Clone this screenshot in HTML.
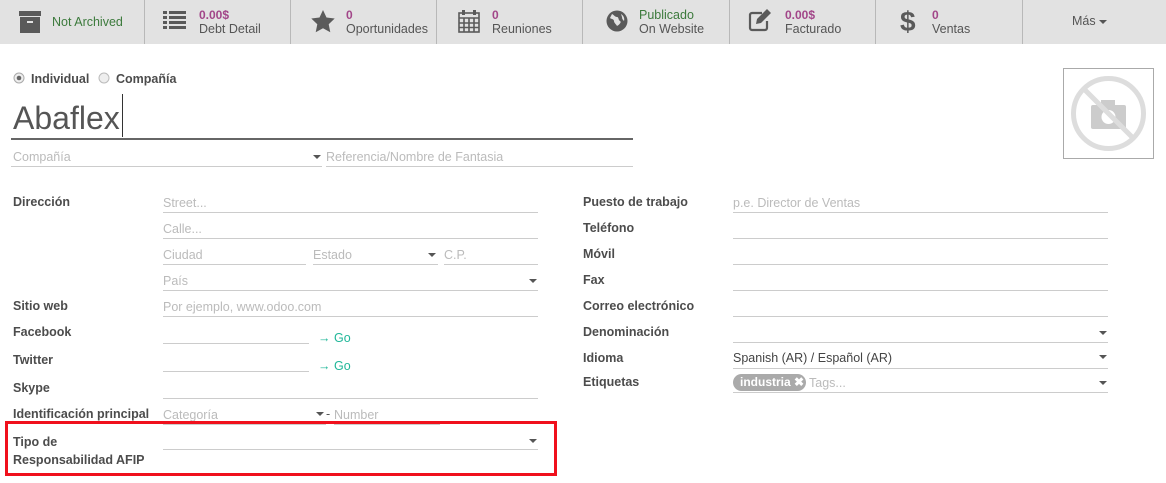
<!DOCTYPE html>
<html><head><meta charset="utf-8"><style>
*{box-sizing:border-box;margin:0;padding:0}
body{width:1166px;height:483px;background:#fff;font-family:"Liberation Sans",sans-serif;font-size:12.5px;color:#4c4c4c;position:relative;overflow:hidden}
.bar{position:absolute;left:0;top:0;width:1166px;height:44px;background:#e2e2e2}
.btn{position:absolute;top:0;height:44px;border-right:1px solid #b8b8b8}
.btn svg{position:absolute}
.btn .t{position:absolute;line-height:14px;font-size:12.5px;color:#555}
.v{color:#a24689;font-weight:bold;font-size:12px}
.btn .g,.g{color:#3c7a3c}
.a{position:absolute;white-space:nowrap}
.lb{font-weight:bold;color:#4c4c4c;font-size:12.5px}
.ph{color:#bbb;font-size:12.5px}
.ln{position:absolute;height:1px;background:#ccc}
.car{position:absolute;width:0;height:0;border-left:4px solid transparent;border-right:4px solid transparent;border-top:4px solid #555}
</style></head><body>
<div class="bar">
 <div class="btn" style="left:0;width:145px">
  <svg style="left:19px;top:11px" width="22" height="22" viewBox="0 0 22 22"><rect x="0" y="0" width="22" height="5" fill="#5a5a5a"/><rect x="1" y="6" width="20" height="16" fill="#5a5a5a"/><rect x="8" y="10" width="6" height="2" fill="#e2e2e2"/></svg>
  <div class="t g" style="left:52px;top:15px;color:#3c7a3c">Not Archived</div></div>
 <div class="btn" style="left:145px;width:146px">
  <svg style="left:18px;top:11px" width="23" height="19" viewBox="0 0 23 19"><g fill="#5a5a5a"><rect x="0" y="0" width="4" height="3"/><rect x="6" y="0" width="17" height="3"/><rect x="0" y="5" width="4" height="3"/><rect x="6" y="5" width="17" height="3"/><rect x="0" y="10" width="4" height="3"/><rect x="6" y="10" width="17" height="3"/><rect x="0" y="15" width="4" height="3"/><rect x="6" y="15" width="17" height="3"/></g></svg>
  <div class="t" style="left:54px;top:8px"><span class="v">0.00$</span><br>Debt Detail</div></div>
 <div class="btn" style="left:291px;width:146px">
  <svg style="left:20px;top:10px" width="24" height="23" viewBox="0 0 24 23"><path d="M12 0l3.5 7.5 8.2 1-6 5.7 1.6 8.1L12 18.3 4.7 22.3l1.6-8.1-6-5.7 8.2-1z" fill="#5a5a5a"/></svg>
  <div class="t" style="left:55px;top:8px"><span class="v">0</span><br>Oportunidades</div></div>
 <div class="btn" style="left:437px;width:146px">
  <svg style="left:21px;top:9px" width="22" height="24" viewBox="0 0 22 24"><g fill="none" stroke="#5a5a5a" stroke-width="1.6"><rect x="1" y="4" width="20" height="19"/><path d="M1 9h20M1 14h20M1 18.5h20M6 9v14M11 9v14M16 9v14"/></g><rect x="4" y="1" width="3" height="5" fill="#5a5a5a"/><rect x="15" y="1" width="3" height="5" fill="#5a5a5a"/></svg>
  <div class="t" style="left:55px;top:8px"><span class="v">0</span><br>Reuniones</div></div>
 <div class="btn" style="left:583px;width:147px">
  <svg style="left:23px;top:10px" width="22" height="22" viewBox="0 0 22 22"><circle cx="11" cy="11" r="10.5" fill="#5a5a5a"/><path d="M6 4c2 1 3 3 5 3s1 3 3 4-1 4-3 5c-1-2-3-3-3-5S5 9 4 8zM15 4c2 1 4 4 3 7-1-1-2-2-2-4z" fill="#e2e2e2"/></svg>
  <div class="t" style="left:56px;top:8px"><span class="g">Publicado</span><br>On Website</div></div>
 <div class="btn" style="left:730px;width:146px">
  <svg style="left:18px;top:8px" width="24" height="24" viewBox="0 0 24 24"><path d="M14 5H4a2 2 0 0 0-2 2v13a2 2 0 0 0 2 2h13a2 2 0 0 0 2-2v-7" fill="none" stroke="#5a5a5a" stroke-width="2.2"/><path d="M19 1l4 4-10 10-5 1 1-5z" fill="#5a5a5a"/></svg>
  <div class="t" style="left:55px;top:8px"><span class="v">0.00$</span><br>Facturado</div></div>
 <div class="btn" style="left:876px;width:147px">
  <div class="a" style="left:24px;top:5px;font-size:28px;font-weight:bold;color:#5a5a5a;line-height:34px">$</div>
  <div class="t" style="left:56px;top:8px"><span class="v">0</span><br>Ventas</div></div>
 <div class="a" style="left:1072px;top:14px;color:#555">Más</div>
 <div class="car" style="left:1099px;top:20px"></div>
</div>

<svg class="a" style="left:13px;top:72px" width="12" height="12"><circle cx="6" cy="6" r="5" fill="#eee" stroke="#aaa"/><circle cx="6" cy="6" r="2.3" fill="#666"/></svg>
<div class="a lb" style="left:31px;top:72px">Individual</div>
<svg class="a" style="left:98px;top:72px" width="12" height="12"><circle cx="6" cy="6" r="5" fill="#eee" stroke="#bbb"/></svg>
<div class="a lb" style="left:116px;top:72px">Compañía</div>
<div class="a" style="left:13px;top:96px;font-size:32px;color:#555;line-height:44px">Abaflex</div>
<div class="a" style="left:122px;top:94px;width:1px;height:43px;background:#333"></div>
<div class="a" style="left:11px;top:138px;width:622px;height:2px;background:#666"></div>
<div class="a ph" style="left:13px;top:150px">Compañía</div>
<div class="ln" style="left:11px;top:166px;width:311px"></div>
<div class="car" style="left:313px;top:155px"></div>
<div class="a ph" style="left:326px;top:150px">Referencia/Nombre de Fantasia</div>
<div class="ln" style="left:326px;top:166px;width:307px"></div>

<div class="a" style="left:1063px;top:68px;width:91px;height:91px;border:1px solid #aaa"></div>
<svg class="a" style="left:1068px;top:73px" width="81" height="81" viewBox="0 0 81 81"><circle cx="40.5" cy="40.5" r="35" fill="none" stroke="#ddd" stroke-width="5"/><rect x="23" y="32" width="35" height="24" rx="2" fill="#ccc"/><rect x="33" y="27" width="14" height="7" fill="#ccc"/><circle cx="40.5" cy="44" r="7" fill="#fff"/><line x1="16" y1="16" x2="65" y2="65" stroke="#ddd" stroke-width="5"/></svg>

<div class="a lb" style="left:13px;top:195px">Dirección</div>
<div class="a ph" style="left:163px;top:196px">Street...</div><div class="ln" style="left:163px;top:212px;width:375px"></div>
<div class="a ph" style="left:163px;top:222px">Calle...</div><div class="ln" style="left:163px;top:238px;width:375px"></div>
<div class="a ph" style="left:163px;top:248px">Ciudad</div><div class="ln" style="left:163px;top:264px;width:143px"></div>
<div class="a ph" style="left:313px;top:248px">Estado</div><div class="ln" style="left:313px;top:264px;width:125px"></div><div class="car" style="left:428px;top:253px"></div>
<div class="a ph" style="left:444px;top:248px">C.P.</div><div class="ln" style="left:444px;top:264px;width:94px"></div>
<div class="a ph" style="left:163px;top:274px">País</div><div class="ln" style="left:163px;top:290px;width:375px"></div><div class="car" style="left:529px;top:279px"></div>
<div class="a lb" style="left:13px;top:299px">Sitio web</div>
<div class="a ph" style="left:163px;top:300px">Por ejemplo, www.odoo.com</div><div class="ln" style="left:163px;top:316px;width:375px"></div>
<div class="a lb" style="left:13px;top:325px">Facebook</div>
<div class="ln" style="left:163px;top:343px;width:146px"></div>
<div class="a" style="left:318px;top:331px;color:#21b799">→ Go</div>
<div class="a lb" style="left:13px;top:353px">Twitter</div>
<div class="ln" style="left:163px;top:371px;width:146px"></div>
<div class="a" style="left:318px;top:359px;color:#21b799">→ Go</div>
<div class="a lb" style="left:13px;top:381px">Skype</div>
<div class="ln" style="left:163px;top:398px;width:375px"></div>
<div class="a lb" style="left:13px;top:407px">Identificación principal</div>
<div class="a ph" style="left:163px;top:408px">Categoría</div><div class="ln" style="left:163px;top:424px;width:163px"></div><div class="car" style="left:316px;top:412px"></div>
<div class="a" style="left:326px;top:407px;color:#555">-</div>
<div class="a ph" style="left:334px;top:408px">Number</div><div class="ln" style="left:334px;top:424px;width:106px"></div>
<div class="a" style="left:5px;top:421px;width:552px;height:55px;border:3px solid #f0101c"></div>
<div class="a lb" style="left:13px;top:433px;line-height:18px">Tipo de<br>Responsabilidad AFIP</div>
<div class="ln" style="left:163px;top:449px;width:375px"></div><div class="car" style="left:529px;top:439px"></div>

<div class="a lb" style="left:583px;top:195px">Puesto de trabajo</div>
<div class="a ph" style="left:733px;top:196px">p.e. Director de Ventas</div><div class="ln" style="left:733px;top:212px;width:375px"></div>
<div class="a lb" style="left:583px;top:221px">Teléfono</div><div class="ln" style="left:733px;top:238px;width:375px"></div>
<div class="a lb" style="left:583px;top:247px">Móvil</div><div class="ln" style="left:733px;top:264px;width:375px"></div>
<div class="a lb" style="left:583px;top:273px">Fax</div><div class="ln" style="left:733px;top:290px;width:375px"></div>
<div class="a lb" style="left:583px;top:299px">Correo electrónico</div><div class="ln" style="left:733px;top:316px;width:375px"></div>
<div class="a lb" style="left:583px;top:325px">Denominación</div><div class="ln" style="left:733px;top:342px;width:375px"></div><div class="car" style="left:1099px;top:331px"></div>
<div class="a lb" style="left:583px;top:351px">Idioma</div>
<div class="a" style="left:733px;top:351px;color:#444">Spanish (AR) / Español (AR)</div><div class="ln" style="left:733px;top:368px;width:375px"></div><div class="car" style="left:1099px;top:355px"></div>
<div class="a lb" style="left:583px;top:375px">Etiquetas</div>
<div class="a" style="left:733px;top:374px;height:17px;width:73px;border-radius:9px;background:#aaa;color:#fff;font-weight:bold;font-size:12px;line-height:17px;padding-left:7px">industria ✖</div>
<div class="a ph" style="left:809px;top:376px">Tags...</div>
<div class="ln" style="left:733px;top:392px;width:375px"></div><div class="car" style="left:1099px;top:381px"></div>
</body></html>
